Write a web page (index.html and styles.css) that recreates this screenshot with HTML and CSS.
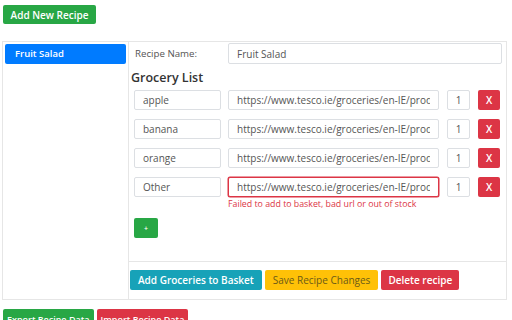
FILE: index.html
```html
<!DOCTYPE html>
<html lang="en">
<head>
  <meta charset="UTF-8">
  <title>Recipe Basket</title>
  <link rel="stylesheet" href="styles.css">
</head>
<body>
  <div class="top-bar">
    <button class="btn btn-green">Add New Recipe</button>
  </div>

  <div class="card">
    <div class="recipe-list">
      <div class="recipe-item active">Fruit Salad</div>
    </div>

    <div class="recipe-edit">
      <div class="edit-body">
        <div class="name-row">
          <label>Recipe Name:</label>
          <input class="field" value="Fruit Salad">
        </div>

        <h3>Grocery List</h3>

        <div class="item-row">
          <input class="field" value="apple">
          <input class="field" value="https://www.tesco.ie/groceries/en-IE/products/1">
          <input class="field qty" value="1">
          <button class="btn btn-red x-btn">X</button>
        </div>
        <div class="item-row">
          <input class="field" value="banana">
          <input class="field" value="https://www.tesco.ie/groceries/en-IE/products/2">
          <input class="field qty" value="1">
          <button class="btn btn-red x-btn">X</button>
        </div>
        <div class="item-row">
          <input class="field" value="orange">
          <input class="field" value="https://www.tesco.ie/groceries/en-IE/products/3">
          <input class="field qty" value="1">
          <button class="btn btn-red x-btn">X</button>
        </div>
        <div class="item-row">
          <input class="field" value="Other">
          <input class="field invalid" value="https://www.tesco.ie/groceries/en-IE/products/4">
          <input class="field qty" value="1">
          <button class="btn btn-red x-btn">X</button>
        </div>
        <div class="error">Failed to add to basket, bad url or out of stock</div>

        <button class="btn btn-green plus-btn">+</button>
      </div>

      <div class="edit-footer">
        <button class="btn btn-teal">Add Groceries to Basket</button>
        <button class="btn btn-yellow">Save Recipe Changes</button>
        <button class="btn btn-red">Delete recipe</button>
      </div>
    </div>
  </div>

  <div class="data-btns">
    <button class="btn btn-green">Export Recipe Data</button>
    <button class="btn btn-red">Import Recipe Data</button>
  </div>
</body>
</html>
```

FILE: styles.css
```css
* {
  margin: 0;
  padding: 0;
  box-sizing: border-box;
}
body {
  font-family: 'Open Sans', sans-serif;
  font-size: 10px;
  background: #fff;
  color: #212529;
  padding: 5px 3px 0 3px;
  overflow: hidden;
}
.top-bar {
  display: flex;
}
.btn {
  font-family: 'Open Sans', sans-serif;
  font-size: 10px;
  font-weight: 600;
  height: 20px;
  padding: 0 8px;
  border: none;
  border-radius: 2px;
  color: #fff;
  cursor: pointer;
}
.top-bar .btn {
  height: 19px;
  width: 93px;
  padding: 0;
}
.btn-green { background: #28a745; }
.btn-red { background: #dc3545; }
.btn-teal { background: #17a2b8; }
.btn-yellow {
  background: #ffc107;
  color: #6b5a17;
  font-weight: 400;
}
.card {
  display: flex;
  margin: 17px 2px 0 -1px;
  border: 1px solid #e6e6e6;
  height: 259px;
}
.recipe-list {
  width: 126px;
  padding: 2px;
  border-right: 1px solid #e6e6e6;
}
.recipe-item {
  height: 20px;
  line-height: 20px;
  padding-left: 10px;
  font-size: 9.5px;
  font-weight: 600;
  border-radius: 2px;
}
.recipe-item.active {
  background: #007bff;
  color: #fff;
}
.recipe-edit {
  flex: 1;
  display: flex;
  flex-direction: column;
}
.edit-body {
  flex: 1;
  padding: 1px 4px 0 5px;
}
.field {
  font-family: 'Open Sans', sans-serif;
  font-size: 10px;
  color: #555;
  height: 20px;
  padding: 0 8px;
  border: 1px solid #dcdfe3;
  border-radius: 2px;
  min-width: 0;
}
.field.invalid {
  border-color: #dc3545;
  box-shadow: 0 0 0 0.5px #dc3545;
}
.name-row {
  display: flex;
  align-items: center;
  gap: 7px;
}
.name-row label {
  width: 87px;
  padding-left: 1px;
  font-size: 9.7px;
  color: #555;
}
.name-row .field {
  flex: 1;
  height: 21px;
}
h3 {
  font-size: 12.5px;
  font-weight: 600;
  color: #333;
  margin: 5px 0 4px -3px;
}
.item-row {
  display: flex;
  gap: 7px;
  margin-bottom: 9px;
  padding-right: 2px;
}
.item-row:nth-of-type(n+3) {
  margin-top: 1px;
}
.item-row .field:first-child {
  width: 87px;
}
.item-row .field:nth-child(2) {
  flex: 1;
}
.item-row .qty {
  width: 23px;
  padding: 0;
  text-align: center;
  margin-left: 1px;
}
.x-btn {
  width: 22px;
  padding: 0;
  margin-left: 1px;
}
.error {
  font-size: 8.8px;
  color: #dc3545;
  margin: -8px 0 0 94px;
}
.plus-btn {
  width: 24px;
  padding: 0;
  font-size: 7px;
  margin-top: 8px;
}
.edit-footer {
  border-top: 1px solid #e6e6e6;
  padding: 8px 1px 9px;
  display: flex;
  gap: 3px;
}
.edit-footer .btn {
  padding: 0 8px;
}
.edit-footer .btn-red {
  padding: 0 7px;
}
.data-btns {
  margin-top: 9px;
  display: flex;
  gap: 3px;
}
.data-btns .btn {
  font-size: 9px;
  padding: 0 4px;
}
```
